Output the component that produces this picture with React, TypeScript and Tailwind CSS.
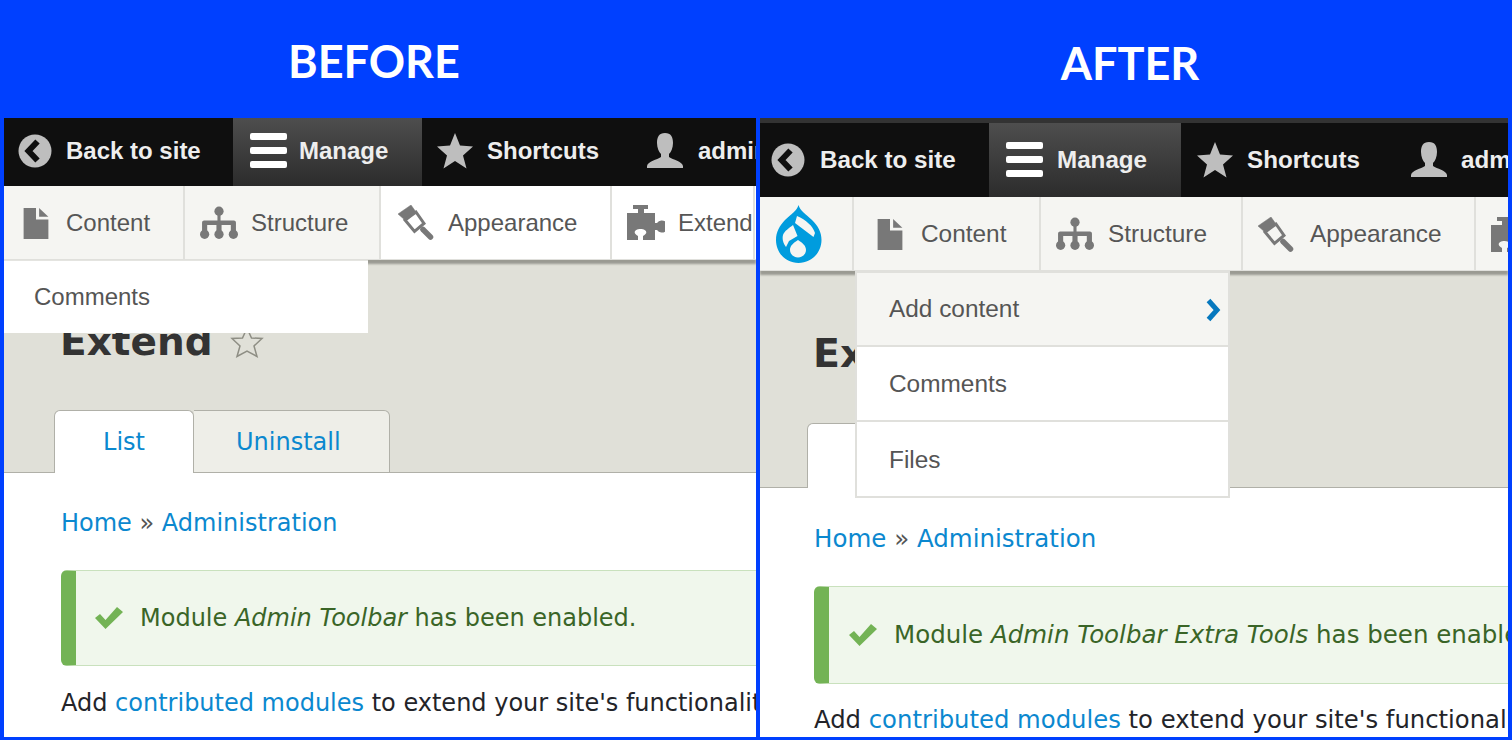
import React from 'react';

const TopItem = ({ icon, label, className = '' }: { icon: React.ReactNode; label: string; className?: string }) => (
  <div className={`flex items-center h-full shrink-0 font-bold text-[#eeeeee] ${className}`}>
    {icon}
    <span className="whitespace-nowrap">{label}</span>
  </div>
);

const BackIcon = () => (
  <svg width="34" height="34" viewBox="0 0 34 34">
    <circle cx="17" cy="17" r="16.5" fill="#bebebe" />
    <path d="M19.5 7.5 L10.5 17 L19.5 26.5" fill="none" stroke="#0f0f0f" strokeWidth="6" />
  </svg>
);

const BurgerIcon = () => (
  <svg width="38" height="36" viewBox="0 0 38 36" fill="#ffffff">
    <rect x="0" y="0" width="37" height="7" rx="2" />
    <rect x="0" y="14" width="37" height="7" rx="2" />
    <rect x="0" y="28" width="37" height="7" rx="2" />
  </svg>
);

const StarIcon = () => (
  <svg width="36" height="36" viewBox="0 0 36 36" fill="#bebebe">
    <path d="M18 0 L23 12.5 L36 13.5 L26 22.5 L29.5 35.5 L18 28 L6.5 35.5 L10 22.5 L0 13.5 L13 12.5 Z" />
  </svg>
);

const UserIcon = () => (
  <svg width="36" height="36" viewBox="0 0 36 36" fill="#bebebe">
    <path d="M18 0 C24 0 26 4 26 10 C26 15 24 19 22 21 L22 24 C26 27 35 28 36 33 L36 35 L0 35 L0 33 C1 28 10 27 14 24 L14 21 C12 19 10 15 10 10 C10 4 12 0 18 0 Z" />
  </svg>
);

const FileIcon = () => (
  <svg width="26" height="32" viewBox="0 0 24 31" fill="#787878">
    <path d="M0 1 L12 1 L12 12 L24 12 L24 31 L0 31 Z" />
    <path d="M15 1 L24 9.5 L15 9.5 Z" />
  </svg>
);

const TreeIcon = () => (
  <svg width="38" height="34" viewBox="0 0 37 33" fill="#787878">
    <circle cx="18.5" cy="5" r="4.5" />
    <circle cx="4.5" cy="27.5" r="4.5" />
    <circle cx="18.5" cy="27.5" r="4.5" />
    <circle cx="32.5" cy="27.5" r="4.5" />
    <path d="M17 5 H20 V14 H33 Q35 14 35 16 V27 H30 V18.5 H21 V27 H16 V18.5 H7 V27 H2 V16 Q2 14 4 14 H17 Z" />
  </svg>
);

const BrushIcon = () => (
  <svg width="36" height="35" viewBox="0 0 36 35" fill="none" stroke="#787878">
    <path d="M0 9 L13 0 L18 7 L8 16 Z" fill="#787878" strokeWidth="0.5" />
    <path d="M7 15 L18 7 L26 18.5 L16.5 26.5 Z" strokeWidth="3" />
    <path d="M25 24.5 L32.5 32" strokeWidth="5.5" strokeLinecap="round" />
  </svg>
);

const PuzzleIcon = () => (
  <svg width="38" height="35" viewBox="0 0 38 35" fill="#787878">
    <path d="M6 0 H21 V4 H17 V8 H28 V18 H30 A6 6 0 1 1 30 25 H28 V35 H16 V31 C22 28 19 24 13.5 24 C8 24 5 28 11 31 V35 H0 V8 H11 V4 H6 Z" />
  </svg>
);

const DrupalLogo = () => (
  <svg width="46" height="58" viewBox="0 0 46 58">
    <path
      fillRule="evenodd"
      fill="#009cde"
      d="M22.5 0 C24 6 30 9 36 15 C42 21 45.5 27 45.5 35 C45.5 48 35 58 22.5 58 C10 58 0 48 0 35 C0 27 3.5 21 9 15 C15 9 21 6 22.5 0 Z
         M21 11 L19 18 L37.5 32 L39 28 C37 21 30 15 21 11 Z
         M17 20 C13 23 8.5 26 7 30 C6 34 7 38 10 42 L13 36 L21.5 31 Z
         M22 35 C17 38 14 41 14 45 C14 49.5 18 52.5 22 52.5 C26 52.5 30 49.5 30 45 C30 41 27 38 22 35 Z"
    />
  </svg>
);

const CheckIcon = () => (
  <svg width="28" height="22" viewBox="0 0 28 22" fill="#73b355">
    <path d="M0 11 L5 7 L10.5 13 L22 0 L28 5 L10.5 22 Z" />
  </svg>
);

const TrayItem = ({ icon, label, className = '' }: { icon: React.ReactNode; label: string; className?: string }) => (
  <div className={`flex items-center h-full shrink-0 border-r-2 border-[#e0e0dc] text-[#565656] ${className}`}>
    {icon}
    <span className="whitespace-nowrap">{label}</span>
  </div>
);

const Message = ({ children, className = '', iconGap = 'ml-[19px]' }: { children: React.ReactNode; className?: string; iconGap?: string }) => (
  <div className={`flex items-center rounded-l-md bg-[#f0f7ec] border border-[#c9e1bd] border-l-[15px] border-l-[#73b355] text-[#3a6527] whitespace-nowrap ${className}`}>
    <span className={`mr-[17px] shrink-0 ${iconGap}`}><CheckIcon /></span>
    <span>{children}</span>
  </div>
);

export default function App() {
  return (
    <div className="h-[740px] w-[1512px] overflow-hidden bg-[#0040ff] font-['Liberation_Sans',sans-serif]">
      <div className="flex h-[118px] text-white font-['Lato',sans-serif] font-bold text-[45px]">
        <div className="w-[740px] ml-[4px] flex items-center justify-center pt-[6px]">BEFORE</div>
        <div className="w-[740px] ml-[16px] flex items-center justify-center pt-[9px]">AFTER</div>
      </div>

      <div className="flex h-[619px] px-[4px] gap-[4px]">
        {/* before */}
        <div className="relative w-[752px] h-full overflow-hidden bg-white">
          <div className="flex items-center h-[68px] bg-[#0f0f0f] text-[24px]">
            <TopItem className="w-[229px] pl-[14px] pb-[2px] gap-[14px]" icon={<BackIcon />} label="Back to site" />
            <TopItem className="w-[189px] pl-[17px] pb-[2px] gap-[11px] bg-gradient-to-b from-[#4e4e4e] to-[#2c2c2c]" icon={<BurgerIcon />} label="Manage" />
            <TopItem className="w-[200px] pl-[15px] pb-[2px] gap-[14px]" icon={<StarIcon />} label="Shortcuts" />
            <TopItem className="pl-[25px] pb-[2px] gap-[15px]" icon={<UserIcon />} label="admin" />
          </div>
          <div className="relative z-10 flex h-[74px] bg-white border-b-[1px] border-[#e0e0dc] shadow-[0_4px_2px_#9a9a92] text-[24px]">
            <TrayItem className="w-[181px] pl-[19px] gap-[17px] bg-[#f5f5f2]" icon={<FileIcon />} label="Content" />
            <TrayItem className="w-[196px] pl-[15px] gap-[13px] bg-[#f5f5f2]" icon={<TreeIcon />} label="Structure" />
            <TrayItem className="w-[231px] pl-[17px] gap-[14px]" icon={<BrushIcon />} label="Appearance" />
            <TrayItem className="pl-[15px] gap-[13px] border-r-0" icon={<PuzzleIcon />} label="Extend" />
          </div>

          <div className="h-[213px] pt-[60px] bg-[#e0e0d8] border-b border-[#b0b0a8] relative">
            <div className="flex items-center pl-[56px] gap-[17px] font-['DejaVu_Sans',sans-serif] font-bold text-[39px] text-[#333333] leading-[44px]">
              <span>Extend</span>
              <svg width="34" height="32" viewBox="0 0 34 32" fill="none" stroke="#8e8e84" strokeWidth="1.5">
                <path d="M17 2 L21.5 12 L32 12.5 L24 20 L27 30.5 L17 25 L7 30.5 L10 20 L2 12.5 L12.5 12 Z" />
              </svg>
            </div>
            <div className="absolute left-[50px] bottom-[-1px] flex font-['DejaVu_Sans',sans-serif] text-[24px] text-[#0b88cf]">
              <div className="w-[140px] h-[63px] flex items-center justify-center bg-white border border-b-0 border-[#b0b0a8] rounded-t-md">List</div>
              <div className="w-[196px] h-[63px] flex items-center pl-[42px] bg-[#eeeee8] border border-l-0 border-[#b0b0a8] rounded-tr-md">Uninstall</div>
            </div>
          </div>

          <div className="pl-[57px] pt-[35px] font-['DejaVu_Sans',sans-serif] text-[24px] text-[#232429]">
            <div className="h-[30px] leading-[30px] whitespace-nowrap">
              <span className="text-[#0b88cf]">Home</span> <span className="text-[#555555]">»</span> <span className="text-[#0b88cf]">Administration</span>
            </div>
            <Message className="w-[800px] h-[96px] mt-[32px] text-[24px]">
              Module <em>Admin Toolbar</em> has been enabled.
            </Message>
            <div className="mt-[22px] whitespace-nowrap leading-[30px]">
              Add <span className="text-[#0b88cf]">contributed modules</span> to extend your site's functionality.
            </div>
          </div>

          <div className="absolute z-20 left-0 top-[142px] w-[364px] h-[73px] flex items-center pl-[30px] pb-[1px] bg-white border-t border-[#e4e4e0] text-[24px] text-[#555555]">
            Comments
          </div>
        </div>

        {/* after */}
        <div className="relative w-[748px] h-full overflow-hidden bg-white">
          <div className="h-[5px] bg-[#333333]" />
          <div className="flex items-center h-[74px] bg-[#0f0f0f] text-[24.2px]">
            <TopItem className="w-[229px] pl-[11px] gap-[15px]" icon={<BackIcon />} label="Back to site" />
            <TopItem className="w-[192px] pl-[17px] gap-[13px] bg-gradient-to-b from-[#4e4e4e] to-[#2c2c2c]" icon={<BurgerIcon />} label="Manage" />
            <TopItem className="w-[214px] pl-[16px] gap-[14px]" icon={<StarIcon />} label="Shortcuts" />
            <TopItem className="pl-[16px] gap-[14px]" icon={<UserIcon />} label="admin" />
          </div>
          <div className="relative z-10 flex h-[74px] bg-[#f5f5f2] border-b-[1px] border-[#e0e0dc] shadow-[0_4px_2px_#9a9a92] text-[24.4px]">
            <div className="w-[94px] h-full shrink-0 flex items-center pl-[16px] border-r-2 border-[#e0e0dc]"><DrupalLogo /></div>
            <TrayItem className="w-[187px] pl-[23px] pt-[1px] gap-[18px]" icon={<FileIcon />} label="Content" />
            <TrayItem className="w-[202px] pl-[15px] pt-[1px] gap-[14px]" icon={<TreeIcon />} label="Structure" />
            <TrayItem className="w-[233px] pl-[15px] pt-[1px] gap-[16px]" icon={<BrushIcon />} label="Appearance" />
            <TrayItem className="pl-[15px] pt-[1px] gap-[13px] border-r-0" icon={<PuzzleIcon />} label="Extend" />
          </div>

          <div className="h-[217px] pt-[60px] bg-[#e0e0d8] border-b border-[#b0b0a8] relative">
            <div className="pl-[53px] font-['DejaVu_Sans',sans-serif] font-bold text-[39.5px] text-[#333333] leading-[44px]">Extend</div>
            <div className="absolute left-[47px] bottom-[-1px] w-[140px] h-[65px] bg-white border border-b-0 border-[#b0b0a8] rounded-t-md" />
          </div>

          <div className="pl-[54px] pt-[36px] font-['DejaVu_Sans',sans-serif] text-[24.5px] text-[#232429]">
            <div className="h-[30px] leading-[30px] whitespace-nowrap">
              <span className="text-[#0b88cf]">Home</span> <span className="text-[#555555]">»</span> <span className="text-[#0b88cf]">Administration</span>
            </div>
            <Message className="w-[800px] h-[98px] mt-[32px] text-[24.5px]" iconGap="ml-[20px]">
              Module <em>Admin Toolbar Extra Tools</em> has been enabled.
            </Message>
            <div className="mt-[21px] whitespace-nowrap leading-[30px] text-[24.3px]">
              Add <span className="text-[#0b88cf]">contributed modules</span> to extend your site's functionality.
            </div>
          </div>

          <div className="absolute z-20 left-[95px] top-[153px] w-[375px] border-2 border-[#e0e0dc] bg-white text-[24.4px] text-[#555555]">
            <div className="h-[74px] flex items-center justify-between pl-[32px] pr-[6px] pt-[1px] bg-[#f5f5f2] border-b-2 border-[#e0e0dc]">
              <span>Add content</span>
              <svg width="16" height="24" viewBox="0 0 16 24" fill="none" stroke="#0678be" strokeWidth="5">
                <path d="M2.5 2.5 L11 12 L2.5 21.5" />
              </svg>
            </div>
            <div className="h-[75px] flex items-center pl-[32px] pt-[2px] border-b-2 border-[#e0e0dc]">Comments</div>
            <div className="h-[74px] flex items-center pl-[32px] pt-[2px]">Files</div>
          </div>
        </div>
      </div>
    </div>
  );
}
